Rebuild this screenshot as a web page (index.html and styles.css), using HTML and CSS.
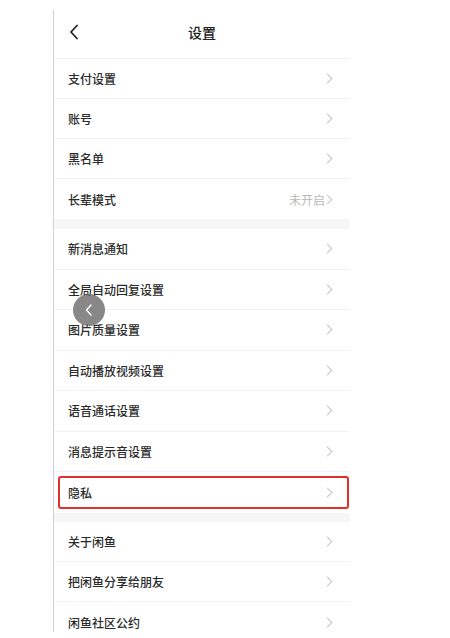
FILE: index.html
```html
<!DOCTYPE html>
<html lang="zh-CN">
<head>
<meta charset="utf-8">
<link rel="stylesheet" href="styles.css">
</head>
<body>
<div class="phone">
  <div class="header">
    <svg class="back" width="10" height="16" viewBox="0 0 10 16"><path d="M8 1.5 L2 8 L8 14.5" fill="none" stroke="#222" stroke-width="1.8" stroke-linecap="round" stroke-linejoin="round"/></svg>
    <span class="title">设置</span>
  </div>
  <div class="section">
    <div class="row"><span>支付设置</span><i class="chev"></i></div>
    <div class="row"><span>账号</span><i class="chev"></i></div>
    <div class="row"><span>黑名单</span><i class="chev"></i></div>
    <div class="row last"><span>长辈模式</span><span class="value">未开启<i class="chev small"></i></span></div>
  </div>
  <div class="gap"></div>
  <div class="section s2">
    <div class="row"><span>新消息通知</span><i class="chev"></i></div>
    <div class="row"><span>全局自动回复设置</span><i class="chev"></i></div>
    <div class="row"><span>图片质量设置</span><i class="chev"></i></div>
    <div class="row"><span>自动播放视频设置</span><i class="chev"></i></div>
    <div class="row"><span>语音通话设置</span><i class="chev"></i></div>
    <div class="row"><span>消息提示音设置</span><i class="chev"></i></div>
    <div class="row last marked"><span>隐私</span><i class="chev"></i></div>
  </div>
  <div class="gap g2"></div>
  <div class="section">
    <div class="row"><span>关于闲鱼</span><i class="chev"></i></div>
    <div class="row"><span>把闲鱼分享给朋友</span><i class="chev"></i></div>
    <div class="row last"><span>闲鱼社区公约</span><i class="chev"></i></div>
  </div>
  <div class="float-back">
    <svg width="10" height="14" viewBox="0 0 10 14"><path d="M7 2 L2.5 7 L7 12" fill="none" stroke="#fff" stroke-width="1.4" stroke-linecap="round" stroke-linejoin="round"/></svg>
  </div>
</div>
</body>
</html>
```

FILE: styles.css
```css
html, body {
  margin: 0;
  padding: 0;
  background: #fff;
}
body {
  font-family: "Noto Sans CJK SC", "Noto Sans", sans-serif;
  color: #333;
}
.phone {
  position: relative;
  margin: 10px 0 0 53px;
  width: 296px;
  height: 622px;
  border-left: 1px solid #cfcfcf;
  overflow: hidden;
}
.header {
  position: relative;
  height: 49px;
  box-sizing: border-box;
  padding-bottom: 5px;
  display: flex;
  align-items: center;
  justify-content: center;
  border-bottom: 1px solid #f2f2f2;
}
.back {
  position: absolute;
  left: 15px;
  top: 14px;
}
.title {
  font-size: 14px;
  font-weight: 500;
  color: #222;
}
.row {
  position: relative;
  height: 40px;
  box-sizing: border-box;
  display: flex;
  align-items: center;
  justify-content: space-between;
  padding: 0 17px 0 14px;
  font-size: 12px;
  font-weight: 500;
  color: #2a2a2a;
  border-bottom: 1px solid #f2f2f2;
}
.row.last {
  border-bottom: none;
}
.s2 .row {
  height: 40.5px;
}
.chev {
  display: inline-block;
  width: 6px;
  height: 6px;
  border-top: 1px solid #c4c4c4;
  border-right: 1px solid #c4c4c4;
  transform: rotate(45deg);
  margin-right: 2px;
}
.value {
  display: flex;
  align-items: center;
  color: #b8b8b8;
  font-size: 12px;
  font-weight: 400;
}
.chev.small {
  margin-left: -1px;
}
.gap {
  height: 10px;
  background: #f6f6f6;
}
.gap.g2 {
  height: 9.5px;
}
.marked::after {
  content: "";
  position: absolute;
  left: 4px;
  right: 1px;
  top: 3.5px;
  bottom: 4px;
  border: 2px solid #e2302d;
  border-radius: 3px;
}
.float-back {
  position: absolute;
  left: 19px;
  top: 284px;
  width: 32px;
  height: 32px;
  border-radius: 50%;
  background: rgba(110, 110, 110, 0.82);
  display: flex;
  align-items: center;
  justify-content: center;
}
```
